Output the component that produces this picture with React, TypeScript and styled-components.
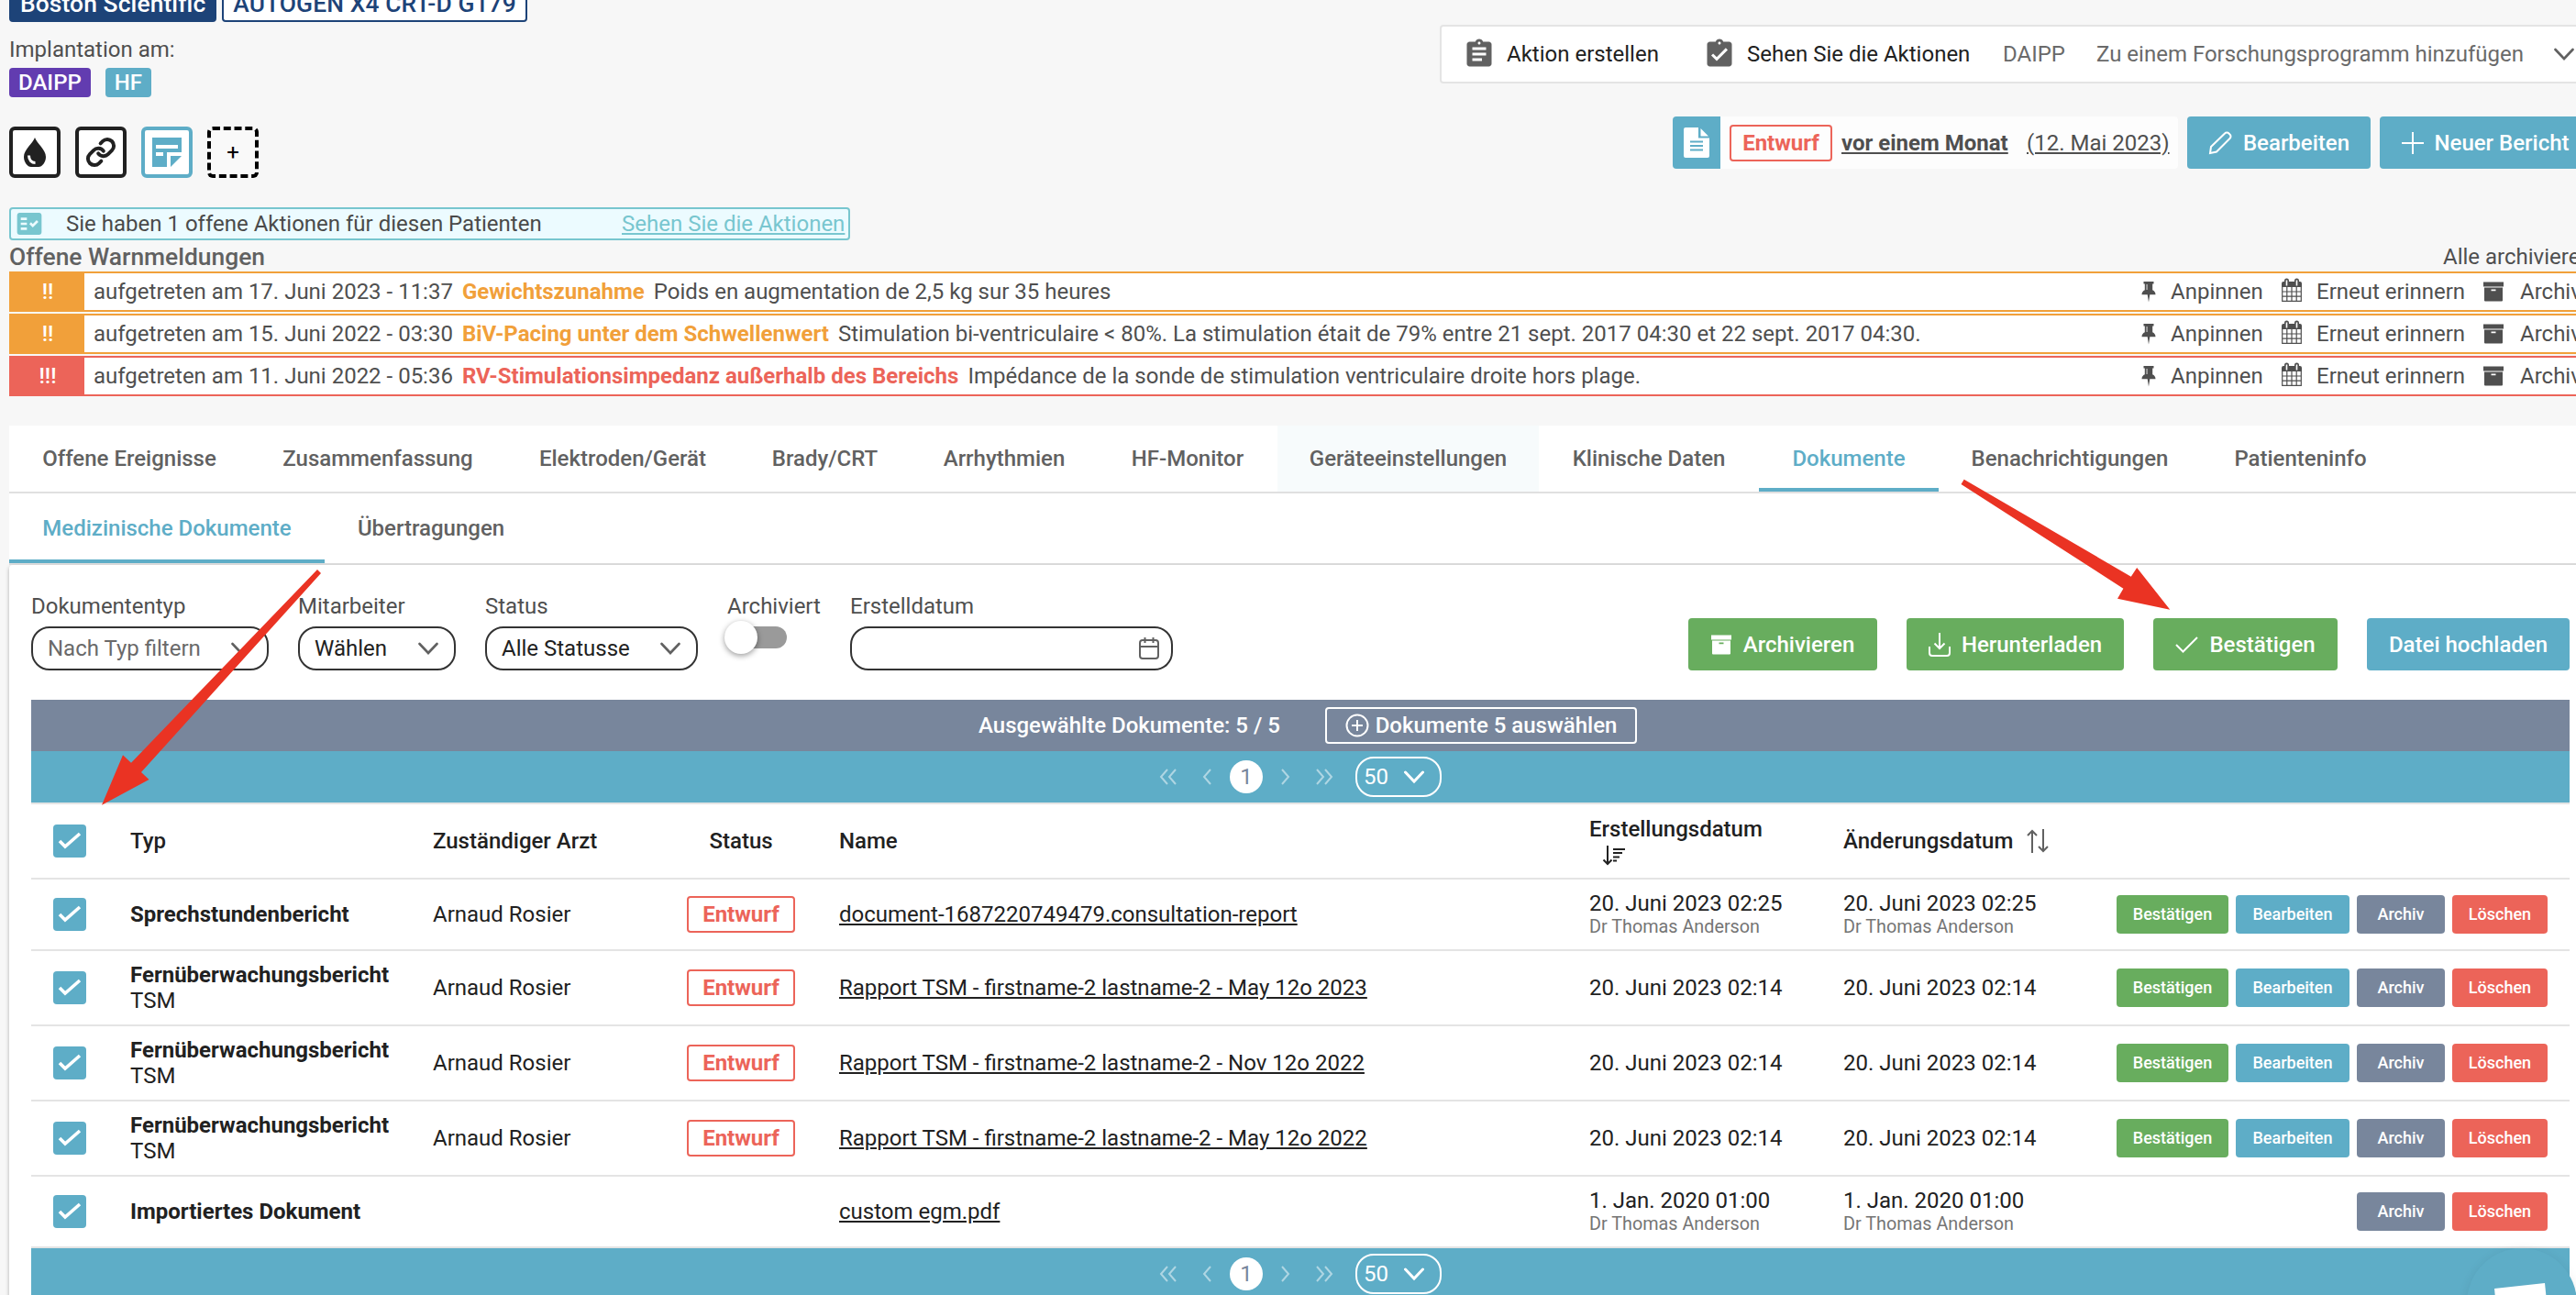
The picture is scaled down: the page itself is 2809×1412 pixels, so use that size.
import styled, { createGlobalStyle, css } from "styled-components";
import {
  MdAssignment,
  MdAssignmentTurnedIn,
  MdFactCheck,
} from "react-icons/md";

const BLUE = "#5eadc7";
const GREEN = "#68ad5e";
const SLATE = "#78869c";
const RED = "#ec6459";
const ORANGE = "#f1a03a";

const GlobalStyle = createGlobalStyle`
  * {
    box-sizing: border-box;
  }

  body {
    margin: 0;
    width: 2809px;
    height: 1412px;
    overflow: hidden;
    background: #f7f7f7;
    font-family: Roboto, "Liberation Sans", sans-serif;
    font-size: 24px;
    line-height: 28px;
    color: #4f4f4f;
  }

  button {
    font: inherit;
    border: none;
    white-space: nowrap;
  }

  svg {
    flex-shrink: 0;
  }
`;

const Page = styled.div`
  position: relative;
  width: 2809px;
  height: 1412px;
  overflow: hidden;
  padding-left: 10px;
`;

const Header = styled.header`
  display: flex;
  justify-content: space-between;
  height: 226px;
`;

const PatientInfo = styled.div`
  display: flex;
  flex-direction: column;
`;

const TagRow = styled.div<{ $gap: number }>`
  display: flex;
  gap: ${({ $gap }) => $gap}px;
`;

const DeviceTag = styled.span<{ $outlined?: boolean }>`
  height: 40px;
  margin-top: -16px;
  padding: 0 10px;
  border: 2px solid #1d4378;
  border-radius: 4px;
  font-weight: 500;
  line-height: 37px;
  font-size: 26.4px;
  letter-spacing: 0.1px;
  white-space: nowrap;
  background: ${({ $outlined }) => ($outlined ? "#fff" : "#1d4378")};
  color: ${({ $outlined }) => ($outlined ? "#1d4378" : "#fff")};
`;

const Implantation = styled.p`
  margin: 16px 0 6px;
`;

const Tag = styled.span<{ $color: string }>`
  height: 32px;
  padding: 0 10px;
  border-radius: 4px;
  font-weight: 500;
  line-height: 32px;
  color: #fff;
  background: ${({ $color }) => $color};
`;

const ShortcutRow = styled.div`
  display: flex;
  gap: 16px;
  margin-top: 32px;
`;

const Shortcut = styled.button<{ $color?: string; $dashed?: boolean }>`
  display: flex;
  align-items: center;
  justify-content: center;
  width: 56px;
  height: 56px;
  padding: 0;
  border: 4px ${({ $dashed }) => ($dashed ? "dashed" : "solid")}
    ${({ $color = "#212121" }) => $color};
  border-radius: 6px;
  background: ${({ $dashed }) => ($dashed ? "#f9f9f9" : "#fff")};
  color: ${({ $color = "#212121" }) => $color};
`;

const HeaderRight = styled.div`
  display: flex;
  flex-direction: column;
  align-items: flex-start;
  width: 1239px;
  padding-top: 27px;
`;

const ActionBar = styled.div`
  display: flex;
  align-items: center;
  width: 1260px;
  height: 64px;
  padding-left: 23px;
  border: 2px solid #e4e4e4;
  border-radius: 4px;
  background: #fff;
  white-space: nowrap;
  color: #212121;

  svg {
    color: #616161;
  }
`;

const ActionLabel = styled.span<{ $width: number; $muted?: boolean }>`
  width: ${({ $width }) => $width}px;
  margin-left: ${({ $muted }) => ($muted ? 0 : 12)}px;
  color: ${({ $muted }) => ($muted ? "#6a6a6a" : "inherit")};
`;

const ReportBar = styled.div`
  display: flex;
  margin-top: 36px;
  margin-left: 254px;
  gap: 10px;
`;

const LastReport = styled.div`
  display: flex;
  align-items: center;
  width: 551px;
  height: 57px;
  border-radius: 4px;
  background: #fdfdfd;
  white-space: nowrap;
  overflow: hidden;
`;

const ReportIcon = styled.div`
  display: flex;
  align-items: center;
  justify-content: center;
  width: 52px;
  height: 57px;
  margin-right: 10px;
  background: ${BLUE};
`;

const Draft = styled.span<{ $width?: number }>`
  display: inline-block;
  width: ${({ $width = 118 }) => $width}px;
  height: 40px;
  border: 2px solid ${RED};
  border-radius: 4px;
  text-align: center;
  font-weight: 700;
  line-height: 36px;
  color: ${RED};
`;

const ReportAge = styled.span`
  width: 202px;
  margin-left: 10px;
  font-weight: 700;
  text-decoration: underline;
`;

const ReportDate = styled.span`
  text-decoration: underline;
`;

const Button = styled.button<{ $color: string; $width: number; $gap?: number }>`
  display: flex;
  align-items: center;
  justify-content: center;
  gap: ${({ $gap = 10 }) => $gap}px;
  flex-shrink: 0;
  width: ${({ $width }) => $width}px;
  height: 57px;
  padding: 0;
  border-radius: 4px;
  font-weight: 500;
  color: #fff;
  background: ${({ $color }) => $color};
`;

const Notice = styled.div`
  display: flex;
  align-items: center;
  width: 917px;
  height: 36px;
  padding-left: 4px;
  border: 2px solid #78c6cf;
  border-radius: 4px;
  background: #ecfbff;
  white-space: nowrap;
  color: #4a4a4a;

  svg {
    color: #78c6cf;
  }
`;

const NoticeText = styled.span`
  width: 606px;
  margin-left: 24px;
`;

const NoticeLink = styled.span`
  color: #78c6cf;
  text-decoration: underline;
`;

const AlertsHeader = styled.div`
  display: flex;
  justify-content: space-between;
  height: 34px;
  padding-top: 4px;
`;

const AlertsTitle = styled.span`
  font-weight: 500;
  font-size: 26.4px;
  color: #616161;
`;

const ArchiveAll = styled.span`
  width: 145px;
  white-space: nowrap;
`;

const Alerts = styled.section`
  display: flex;
  flex-direction: column;
  gap: 2px;
  margin-bottom: 32px;
`;

const AlertRow = styled.div<{ $color: string }>`
  display: flex;
  align-items: center;
  width: 2830px;
  height: 44px;
  border: 2px solid ${({ $color }) => $color};
  background: #fff;
  white-space: nowrap;
`;

const Severity = styled.span<{ $color: string }>`
  width: 80px;
  height: 40px;
  margin-right: 10px;
  text-align: center;
  font-weight: 500;
  line-height: 40px;
  color: #fff;
  background: ${({ $color }) => $color};
`;

const AlertName = styled.span<{ $color: string }>`
  margin: 0 10px;
  font-weight: 700;
  color: ${({ $color }) => $color};
`;

const AlertActions = styled.div`
  display: flex;
  align-items: center;
  flex-shrink: 0;
  width: 501px;
  margin-left: auto;
  margin-right: 2px;
`;

const AlertAction = styled.span<{ $width: number; $gap: number }>`
  display: flex;
  align-items: center;
  gap: ${({ $gap }) => $gap}px;
  width: ${({ $width }) => $width}px;
  flex-shrink: 0;
`;

const TabBar = styled.nav`
  display: flex;
  width: 2830px;
  height: 74px;
  border-bottom: 2px solid #e0e0e0;
  background: #fff;
`;

const Tab = styled.span<{ $width: number; $active?: boolean; $hover?: boolean }>`
  width: ${({ $width }) => $width}px;
  padding-top: 22px;
  text-align: center;
  font-weight: 500;
  white-space: nowrap;
  color: #616161;
  ${({ $hover }) => $hover && "background: #f7fbfc;"}
  ${({ $active }) =>
    $active &&
    css`
      color: ${BLUE};
      border-bottom: 4px solid ${BLUE};
    `}
`;

const SubTabBar = styled(TabBar)`
  height: 78px;

  ${Tab} {
    padding-top: 24px;
  }
`;

const Panel = styled.main`
  width: 2830px;
  height: 820px;
  padding: 31px 0 0 24px;
  background: #fff;
  border-radius: 4px 0 0 0;
  box-shadow: 0 2px 4px rgba(0, 0, 0, 0.3);
`;

const Toolbar = styled.div`
  display: flex;
  width: 2768px;
  height: 116px;
`;

const Field = styled.div<{ $width: number }>`
  display: flex;
  flex-direction: column;
  gap: 8px;
  width: ${({ $width }) => $width}px;
  margin-right: 32px;
  white-space: nowrap;
`;

const Select = styled.div<{ $placeholder?: boolean }>`
  display: flex;
  align-items: center;
  justify-content: space-between;
  height: 48px;
  padding: 0 17px 0 16px;
  border: 2px solid #333;
  border-radius: 20px;
  color: ${({ $placeholder }) => ($placeholder ? "#6a6a6a" : "#212121")};

  svg {
    color: #616161;
  }
`;

const DateInput = styled(Select)`
  justify-content: flex-end;
  padding-right: 13px;
`;

const Switch = styled.div`
  display: flex;
  align-items: center;
  width: 64px;
  height: 24px;
  margin-left: 1px;
  border-radius: 12px;
  background: #9a9a9a;
`;

const SwitchKnob = styled.div`
  width: 36px;
  height: 36px;
  margin-left: -4px;
  border-radius: 50%;
  background: #fff;
  box-shadow: 0 2px 6px rgba(0, 0, 0, 0.4);
`;

const ToolbarButtons = styled.div`
  display: flex;
  gap: 32px;
  margin: 27px 0 0 auto;
`;

const SelectionBar = styled.div`
  display: flex;
  align-items: center;
  width: 2768px;
  height: 56px;
  padding-left: 1033px;
  font-weight: 500;
  color: #fff;
  background: ${SLATE};
`;

const SelectAll = styled.button`
  display: flex;
  align-items: center;
  justify-content: center;
  gap: 7px;
  width: 340px;
  height: 40px;
  margin-left: 48px;
  border: 2px solid #fff;
  border-radius: 4px;
  background: transparent;
  color: #fff;
`;

const SelectionCount = styled.span`
  width: 330px;
  white-space: nowrap;
`;

const PaginationBar = styled.div`
  display: flex;
  align-items: center;
  width: 2768px;
  height: 56px;
  padding-left: 1228px;
  color: #fff;
  background: ${BLUE};
`;

const PageArrow = styled.svg<{ $width: number }>`
  width: ${({ $width }) => $width}px;
  height: 20px;
  fill: none;
  stroke: #fff;
  stroke-width: 2;
  opacity: 0.5;
`;

const CurrentPage = styled.span`
  width: 36px;
  height: 36px;
  margin: 0 19px;
  border-radius: 50%;
  text-align: center;
  line-height: 37px;
  color: ${SLATE};
  background: #fff;
`;

const PageSize = styled.div`
  display: flex;
  align-items: center;
  justify-content: space-between;
  width: 94px;
  height: 44px;
  margin-left: 24px;
  padding: 0 17px 0 7px;
  border: 2px solid #fff;
  border-radius: 20px;
`;

const Row = styled.div<{ $height: number }>`
  display: grid;
  grid-template-columns: 108px 330px 277px 118px 48px 818px 277px 298px 1fr;
  align-items: center;
  width: 2768px;
  height: ${({ $height }) => $height}px;
  border-bottom: 2px solid #e4e4e4;
  color: #212121;
  white-space: nowrap;
`;

const HeaderRow = styled(Row)`
  border-top: 2px solid #e4e4e4;
  font-weight: 500;
`;

const Checkbox = styled.span`
  display: flex;
  align-items: center;
  justify-content: center;
  width: 36px;
  height: 36px;
  margin-left: 24px;
  border-radius: 4px;
  background: ${BLUE};
`;

const StatusCell = styled.span`
  grid-column: span 2;
`;

const StatusHeader = styled(StatusCell)`
  width: 118px;
  text-align: center;
`;

const DocType = styled.span`
  font-weight: 700;
`;

const Subtype = styled.div`
  font-weight: 400;
`;

const DocName = styled.span`
  text-decoration: underline;
`;

const Author = styled.div`
  margin-top: -1px;
  font-size: 19.8px;
  line-height: 26px;
  color: #757575;
`;

const SortHeader = styled.span`
  display: flex;
  align-items: center;
  gap: 14px;
`;

const StackedSortHeader = styled.span`
  display: flex;
  flex-direction: column;

  svg {
    margin: 4px 0 0 14px;
  }
`;

const RowActions = styled.div`
  display: flex;
  justify-content: flex-end;
  gap: 8px;
  padding-right: 24px;
`;

const SmallButton = styled(Button)`
  height: 42px;
  font-size: 18px;
`;

const Annotation = styled.svg`
  position: absolute;
  left: 0;
  top: 0;
  width: 2809px;
  height: 1412px;
  pointer-events: none;
  fill: #ea3323;
`;

const ChatLauncher = styled.div`
  position: absolute;
  left: 2690px;
  top: 1361px;
  width: 120px;
  height: 120px;
  padding: 38px 0 0 30px;
  border-radius: 50%;
  background: ${BLUE};
  box-shadow: 0 2px 12px rgba(0, 0, 0, 0.08);
`;

const Chevron = ({ size = 22, width = 2.6 }) => (
  <svg width={size} height={size} viewBox="0 0 22 22" fill="none">
    <path
      d="M1.500 6l9.500 10 9.500-10"
      stroke="currentColor"
      strokeWidth={width}
      strokeLinecap="round"
    />
  </svg>
);

const ArchiveIcon = () => (
  <svg width="22" height="22" viewBox="0 0 22 22" fill="currentColor">
    <path d="M0 .5h22V5.500H0z" />
    <path
      fillRule="evenodd"
      d="M1 6.500h20V20.500a1 1 0 0 1-1 1H2a1 1 0 0 1-1-1zm7.500 2v1.800h5V8.500z"
    />
  </svg>
);

const PinIcon = () => (
  <svg width="16" height="24" viewBox="0 0 16 24" fill="currentColor">
    <path d="M2.500 1h11v2.600h-1.300v6.600c2 .8 3.300 2.600 3.300 5H9.300L8 23.500l-1.300-8.300H.5c0-2.400 1.300-4.200 3.300-5V3.600H2.500z" />
    <path d="M5.300 4h1.600v6H5.300z" fill="#aaa" />
  </svg>
);

const MonthIcon = () => (
  <svg width="24" height="30" viewBox="0 0 24 30" fill="none">
    <path
      fill="currentColor"
      d="M1 6a2 2 0 0 1 2-2h1V3a2.500 2.500 0 0 1 5 0v1h6V3a2.500 2.500 0 0 1 5 0v1h1a2 2 0 0 1 2 2v4H1z"
    />
    <path d="M6.500 2.500v6M17.500 2.500v6" stroke="#fff" strokeWidth="1.600" />
    <path
      d="M1.700 10v15.300h20.600V10M1.700 15h20.600M1.700 20.200h20.600M6.800 10v15M12 10v15M17.200 10v15"
      stroke="currentColor"
      strokeWidth="1.200"
    />
  </svg>
);

const CheckIcon = () => (
  <svg width="26" height="20" viewBox="0 0 26 20" fill="none">
    <path d="M2 10l6 6L24 2" stroke="#fff" strokeWidth="3.600" />
  </svg>
);

const alerts = [
  {
    color: ORANGE,
    level: "!!",
    date: "aufgetreten am 17. Juni 2023 - 11:37",
    name: "Gewichtszunahme",
    text: "Poids en augmentation de 2,5 kg sur 35 heures",
  },
  {
    color: ORANGE,
    level: "!!",
    date: "aufgetreten am 15. Juni 2022 - 03:30",
    name: "BiV-Pacing unter dem Schwellenwert",
    text: "Stimulation bi-ventriculaire < 80%. La stimulation était de 79% entre 21 sept. 2017 04:30 et 22 sept. 2017 04:30.",
  },
  {
    color: RED,
    level: "!!!",
    date: "aufgetreten am 11. Juni 2022 - 05:36",
    name: "RV-Stimulationsimpedanz außerhalb des Bereichs",
    text: "Impédance de la sonde de stimulation ventriculaire droite hors plage.",
  },
];

const tabs = [
  { label: "Offene Ereignisse", width: 262 },
  { label: "Zusammenfassung", width: 280 },
  { label: "Elektroden/Gerät", width: 254 },
  { label: "Brady/CRT", width: 187 },
  { label: "Arrhythmien", width: 204 },
  { label: "HF-Monitor", width: 196 },
  { label: "Geräteeinstellungen", width: 285, hover: true },
  { label: "Klinische Daten", width: 240 },
  { label: "Dokumente", width: 196, active: true },
  { label: "Benachrichtigungen", width: 286 },
  { label: "Patienteninfo", width: 217 },
];

interface Document {
  type: string;
  subtype?: string;
  doctor?: string;
  name: string;
  date: string;
  author?: string;
  height: number;
}

const documents: Document[] = [
  {
    type: "Sprechstundenbericht",
    doctor: "Arnaud Rosier",
    name: "document-1687220749479.consultation-report",
    date: "20. Juni 2023 02:25",
    author: "Dr Thomas Anderson",
    height: 78,
  },
  ...["May 12o 2023", "Nov 12o 2022", "May 12o 2022"].map((day) => ({
    type: "Fernüberwachungsbericht",
    subtype: "TSM",
    doctor: "Arnaud Rosier",
    name: `Rapport TSM - firstname-2 lastname-2 - ${day}`,
    date: "20. Juni 2023 02:14",
    height: 82,
  })),
  {
    type: "Importiertes Dokument",
    name: "custom egm.pdf",
    date: "1. Jan. 2020 01:00",
    author: "Dr Thomas Anderson",
    height: 78,
  },
];

const Pagination = () => (
  <PaginationBar>
    <PageArrow $width={22} viewBox="0 0 22 20">
      <path d="M11 2l-7 8 7 8M20 2l-7 8 7 8" />
    </PageArrow>
    <PageArrow $width={38} viewBox="0 0 38 20">
      <path d="M36 2l-7 8 7 8" />
    </PageArrow>
    <CurrentPage>1</CurrentPage>
    <PageArrow $width={12} viewBox="0 0 12 20">
      <path d="M2 2l7 8-7 8" />
    </PageArrow>
    <PageArrow $width={46} viewBox="0 0 46 20">
      <path d="M28 2l7 8-7 8M37 2l7 8-7 8" />
    </PageArrow>
    <PageSize>
      50
      <Chevron width={3} />
    </PageSize>
  </PaginationBar>
);

const App = () => (
  <Page>
    <GlobalStyle />
    <Header>
      <PatientInfo>
        <TagRow $gap={6}>
          <DeviceTag>Boston Scientific</DeviceTag>
          <DeviceTag $outlined>AUTOGEN X4 CRT-D G179</DeviceTag>
        </TagRow>
        <Implantation>Implantation am:</Implantation>
        <TagRow $gap={16}>
          <Tag $color="#623cb0">DAIPP</Tag>
          <Tag $color={BLUE}>HF</Tag>
        </TagRow>
        <ShortcutRow>
          <Shortcut>
            <svg width="26" height="34" viewBox="0 0 26 34" fill="#212121">
              <path d="M13 1C11 7 1 14 1 22c0 6 4 11 8 11h8c4 0 8-5 8-11C25 14 15 7 13 1z" />
              <path
                d="M6.500 20.500c0 5 3 8 7 8"
                stroke="#fff"
                strokeWidth="3"
                fill="none"
              />
            </svg>
          </Shortcut>
          <Shortcut>
            <svg
              width="34"
              height="34"
              viewBox="0 0 24 24"
              fill="none"
              stroke="#212121"
              strokeWidth="2.800"
              strokeLinecap="round"
            >
              <path d="M10 13a5 5 0 0 0 7.540.54l3-3a5 5 0 0 0-7.070-7.070l-1.720 1.710" />
              <path d="M14 11a5 5 0 0 0-7.540-.54l-3 3a5 5 0 0 0 7.070 7.070l1.710-1.710" />
            </svg>
          </Shortcut>
          <Shortcut $color={BLUE}>
            <svg width="32" height="32" viewBox="0 0 32 32" fill={BLUE}>
              <path d="M0 0h32v16H16v16H0zM20 20h12L20 32z" />
              <path d="M4 8h24v4H4zM4 16h8v4H4z" fill="#fff" />
            </svg>
          </Shortcut>
          <Shortcut $color="#000" $dashed>
            +
          </Shortcut>
        </ShortcutRow>
      </PatientInfo>
      <HeaderRight>
        <ActionBar>
          <MdAssignment size={36} />
          <ActionLabel $width={214}>Aktion erstellen</ActionLabel>
          <MdAssignmentTurnedIn size={36} />
          <ActionLabel $width={279}>Sehen Sie die Aktionen</ActionLabel>
          <ActionLabel $width={102} $muted>
            DAIPP
          </ActionLabel>
          <ActionLabel $width={499} $muted>
            Zu einem Forschungsprogramm hinzufügen
          </ActionLabel>
          <Chevron />
        </ActionBar>
        <ReportBar>
          <LastReport>
            <ReportIcon>
              <svg width="28" height="33" viewBox="0 0 28 33" fill="#fff">
                <path d="M2 0h14v11.500h12V31a2 2 0 0 1-2 2H2a2 2 0 0 1-2-2V2a2 2 0 0 1 2-2z" />
                <path d="M18.500 1L27 9.500h-8.500z" />
                <path
                  d="M7 15.500h14M7 20h14M7 24.500h14"
                  stroke={BLUE}
                  strokeWidth="2"
                />
              </svg>
            </ReportIcon>
            <Draft $width={112}>Entwurf</Draft>
            <ReportAge>vor einem Monat</ReportAge>
            <ReportDate>(12. Mai 2023)</ReportDate>
          </LastReport>
          <Button $color={BLUE} $width={200} $gap={12}>
            <svg
              width="26"
              height="26"
              viewBox="0 0 26 26"
              fill="none"
              stroke="#fff"
              strokeWidth="2"
            >
              <path d="M2 24l1-7L18 2.500a3 3 0 0 1 4.500 0l1 1a3 3 0 0 1 0 4.500L9 22.500z" />
            </svg>
            Bearbeiten
          </Button>
          <Button $color={BLUE} $width={230} $gap={12}>
            <svg width="24" height="24" stroke="#fff" strokeWidth="2">
              <path d="M12 0v24M0 12h24" />
            </svg>
            Neuer Bericht
          </Button>
        </ReportBar>
      </HeaderRight>
    </Header>

    <Notice>
      <MdFactCheck size={32} />
      <NoticeText>Sie haben 1 offene Aktionen für diesen Patienten</NoticeText>
      <NoticeLink>Sehen Sie die Aktionen</NoticeLink>
    </Notice>
    <AlertsHeader>
      <AlertsTitle>Offene Warnmeldungen</AlertsTitle>
      <ArchiveAll>Alle archivieren</ArchiveAll>
    </AlertsHeader>
    <Alerts>
      {alerts.map((alert) => (
        <AlertRow key={alert.date} $color={alert.color}>
          <Severity $color={alert.color}>{alert.level}</Severity>
          {alert.date}
          <AlertName $color={alert.color}>{alert.name}</AlertName>
          {alert.text}
          <AlertActions>
            <AlertAction $width={152} $gap={16}>
              <PinIcon />
              Anpinnen
            </AlertAction>
            <AlertAction $width={221} $gap={15}>
              <MonthIcon />
              Erneut erinnern
            </AlertAction>
            <AlertAction $width={128} $gap={18}>
              <ArchiveIcon />
              Archivieren
            </AlertAction>
          </AlertActions>
        </AlertRow>
      ))}
    </Alerts>

    <TabBar>
      {tabs.map((tab) => (
        <Tab
          key={tab.label}
          $width={tab.width}
          $active={tab.active}
          $hover={tab.hover}
        >
          {tab.label}
        </Tab>
      ))}
    </TabBar>
    <SubTabBar>
      <Tab $width={344} $active>
        Medizinische Dokumente
      </Tab>
      <Tab $width={232}>Übertragungen</Tab>
    </SubTabBar>

    <Panel>
      <Toolbar>
        <Field $width={259}>
          Dokumententyp
          <Select $placeholder>
            Nach Typ filtern
            <Chevron />
          </Select>
        </Field>
        <Field $width={172}>
          Mitarbeiter
          <Select>
            Wählen
            <Chevron />
          </Select>
        </Field>
        <Field $width={232}>
          Status
          <Select>
            Alle Statusse
            <Chevron />
          </Select>
        </Field>
        <Field $width={102}>
          Archiviert
          <Switch>
            <SwitchKnob />
          </Switch>
        </Field>
        <Field $width={352}>
          Erstelldatum
          <DateInput>
            <svg
              width="22"
              height="26"
              viewBox="0 0 22 26"
              fill="none"
              stroke="currentColor"
              strokeWidth="2"
            >
              <rect x="1" y="4" width="20" height="20" rx="3" />
              <path d="M1 11h20M6.500 1v6M15.500 1v6" />
            </svg>
          </DateInput>
        </Field>
        <ToolbarButtons>
          <Button $color={GREEN} $width={206} $gap={13}>
            <ArchiveIcon />
            Archivieren
          </Button>
          <Button $color={GREEN} $width={237} $gap={12}>
            <svg
              width="24"
              height="26"
              viewBox="0 0 24 26"
              fill="none"
              stroke="#fff"
              strokeWidth="2"
            >
              <path d="M12 0v17M6.500 11.500L12 17l5.500-5.500M1 15v7a3 3 0 0 0 3 3h16a3 3 0 0 0 3-3v-7" />
            </svg>
            Herunterladen
          </Button>
          <Button $color={GREEN} $width={201} $gap={12}>
            <svg
              width="25"
              height="18"
              viewBox="0 0 25 18"
              fill="none"
              stroke="#fff"
              strokeWidth="2"
            >
              <path d="M1 9l7.500 7.500L24 1" />
            </svg>
            Bestätigen
          </Button>
          <Button $color={BLUE} $width={221}>
            Datei hochladen
          </Button>
        </ToolbarButtons>
      </Toolbar>

      <SelectionBar>
        <SelectionCount>Ausgewählte Dokumente: 5 / 5</SelectionCount>
        <SelectAll>
          <svg
            width="26"
            height="26"
            viewBox="0 0 26 26"
            fill="none"
            stroke="#fff"
            strokeWidth="2"
          >
            <circle cx="13" cy="13" r="11.500" />
            <path d="M13 7v12M7 13h12" />
          </svg>
          Dokumente 5 auswählen
        </SelectAll>
      </SelectionBar>
      <Pagination />

      <HeaderRow $height={84}>
        <Checkbox>
          <CheckIcon />
        </Checkbox>
        <span>Typ</span>
        <span>Zuständiger Arzt</span>
        <StatusHeader>Status</StatusHeader>
        <span>Name</span>
        <StackedSortHeader>
          Erstellungsdatum
          <svg
            width="26"
            height="22"
            viewBox="0 0 26 22"
            fill="none"
            stroke="#212121"
            strokeWidth="2"
          >
            <path d="M6 0v20M1.500 15.500L6 20l4.500-4.500M12 4h13M12 8h10M12 12.500h7M12 16.500h4" />
          </svg>
        </StackedSortHeader>
        <SortHeader>
          Änderungsdatum
          <svg
            width="26"
            height="26"
            viewBox="0 0 26 26"
            fill="none"
            stroke="#616161"
            strokeWidth="2"
          >
            <path d="M7 26V2M2 7l5-5 5 5M19 0v24M14 19l5 5 5-5" />
          </svg>
        </SortHeader>
      </HeaderRow>
      {documents.map((doc) => (
        <Row key={doc.name} $height={doc.height}>
          <Checkbox>
            <CheckIcon />
          </Checkbox>
          <DocType>
            {doc.type}
            {doc.subtype && <Subtype>{doc.subtype}</Subtype>}
          </DocType>
          <span>{doc.doctor}</span>
          <StatusCell>{doc.doctor && <Draft>Entwurf</Draft>}</StatusCell>
          <DocName>{doc.name}</DocName>
          <span>
            {doc.date}
            {doc.author && <Author>{doc.author}</Author>}
          </span>
          <span>
            {doc.date}
            {doc.author && <Author>{doc.author}</Author>}
          </span>
          <RowActions>
            {doc.doctor && (
              <>
                <SmallButton $color={GREEN} $width={122}>
                  Bestätigen
                </SmallButton>
                <SmallButton $color={BLUE} $width={124}>
                  Bearbeiten
                </SmallButton>
              </>
            )}
            <SmallButton $color={SLATE} $width={96}>
              Archiv
            </SmallButton>
            <SmallButton $color={RED} $width={104}>
              Löschen
            </SmallButton>
          </RowActions>
        </Row>
      ))}
      <Pagination />
    </Panel>

    <ChatLauncher>
      <svg width="60" height="50" viewBox="0 0 60 50" fill="#fff">
        <path d="M0 6L55 0l4 40-55 6z" />
      </svg>
    </ChatLauncher>
    <Annotation>
      <path d="M346 621l4 4-196 217 8.500 8-51.500 27.700 23-54.400 9 8.400z" />
      <path d="M2141.700 522.700l-3.200 5.300 176.900 113.700-6.400 11 57.300 12-36.100-45.700-6.400 9.700z" />
    </Annotation>
  </Page>
);

export default App;
